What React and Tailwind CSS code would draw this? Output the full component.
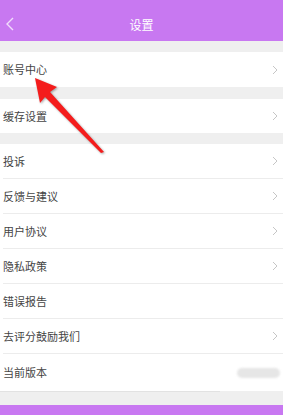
import React from 'react';

const font = { fontFamily: '"Noto Sans CJK SC", "Noto Sans", sans-serif' };

function Chevron() {
  return (
    <svg width="6" height="10" viewBox="0 0 6 10" className="shrink-0">
      <path d="M1 1 L5 5 L1 9" fill="none" stroke="#c6c6c6" strokeWidth="1" />
    </svg>
  );
}

function Row({ label, h = 'h-[35px]' }) {
  return (
    <div className={`flex items-center justify-between pl-[3px] pr-[5px] ${h}`}>
      <span className="text-[11px] text-[#444] leading-none">{label}</span>
      <Chevron />
    </div>
  );
}

export default function App() {
  const rows = ['投诉', '反馈与建议', '用户协议', '隐私政策', '错误报告', '去评分鼓励我们'];
  const noArrow = ['错误报告'];

  return (
    <div className="relative w-[283px] h-[415px] overflow-hidden bg-[#efefef]" style={font}>
      {/* header */}
      <div className="relative flex items-center justify-center h-[41px] bg-[#c878f1]">
        <svg width="10" height="16" viewBox="0 0 10 16" className="absolute left-[5px] top-[17px]">
          <path d="M8 1 L2 7 L8 13" fill="none" stroke="#f1dcfb" strokeWidth="1.4" />
        </svg>
        <span className="text-[12px] text-white mt-[8px]">设置</span>
      </div>

      <div className="h-[11px]" />
      <div className="bg-white">
        <Row label="账号中心" />
      </div>

      <div className="h-[12px]" />
      <div className="bg-white">
        <Row label="缓存设置" h="h-[34px]" />
      </div>

      <div className="h-[11px]" />
      <div className="bg-white pl-[3px]">
        {rows.map(r => (
          <div key={r} className="flex items-center justify-between pr-[5px] h-[35px] border-b border-[#ececec]">
            <span className="text-[11px] text-[#444] leading-none">{r}</span>
            {!noArrow.includes(r) && <Chevron />}
          </div>
        ))}
        <div className="flex items-center justify-between pr-[3px] h-[37px]">
          <span className="text-[11px] text-[#444] leading-none">当前版本</span>
          <div className="w-[43px] h-[10px] rounded-full bg-[#e6e6e6] blur-[1px]" />
        </div>
      </div>
      <div className="h-px w-[220px] bg-[#e2e2e2]" />

      <div className="h-[13px]" />
      <div className="h-[20px] bg-[#c878f1]" />

      {/* annotation arrow */}
      <svg width="283" height="415" className="absolute left-0 top-0 pointer-events-none">
        <polygon
          points="35,78 57,87 50,92 104,152 101,153 45,97 40,103"
          fill="#f41c1c"
          style={{ filter: 'drop-shadow(1px 1px 1px rgba(0,0,0,0.35))' }}
        />
      </svg>
    </div>
  );
}
